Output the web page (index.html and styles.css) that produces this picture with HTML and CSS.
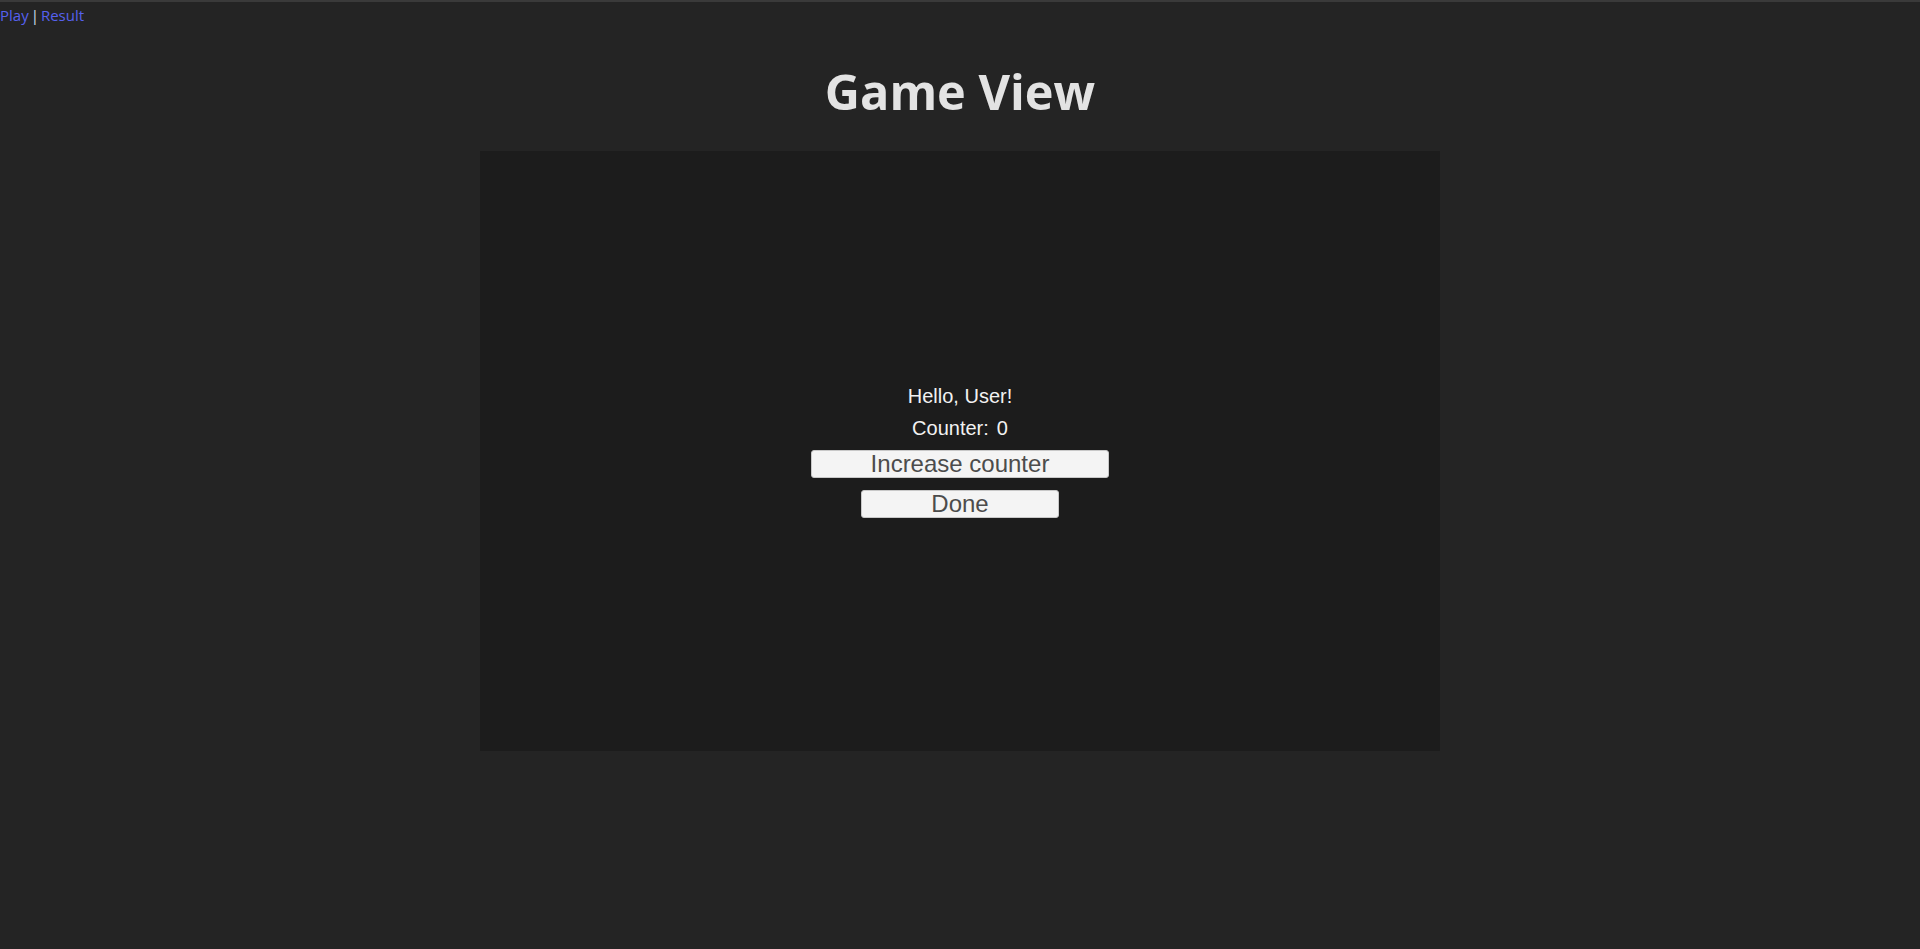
FILE: index.html
```html
<!DOCTYPE html>
<html>
<head>
<meta charset="utf-8">
<title>Game View</title>
<link rel="stylesheet" href="styles.css">
</head>
<body>
<nav class="topnav"><a href="#" class="navlink">Play</a><span class="sep">|</span><a href="#" class="navlink">Result</a></nav>
<main class="page">
  <h1 class="title">Game View</h1>
  <section class="game">
    <div class="panel">
      <div class="label">Hello, User!</div>
      <div class="label counter"><span>Counter:</span><span>0</span></div>
      <button class="btn btn-wide">Increase counter</button>
      <button class="btn btn-narrow">Done</button>
    </div>
  </section>
</main>
</body>
</html>
```
FILE: styles.css
```css
html, body {
  margin: 0;
  padding: 0;
  background: #242424;
  height: 100%;
}
body {
  border-top: 2px solid #3a3a3a;
  box-sizing: border-box;
  font-family: "Open Sans", "Noto Sans", sans-serif;
  color: #e0e0e0;
}
.topnav {
  font-size: 15px;
  line-height: 20px;
  padding-top: 3px;
  height: 21px;
}
.navlink {
  color: #5661ee;
  text-decoration: none;
}
.sep {
  color: #cfe0f0;
  margin: 0 2px;
}
.page {
  display: flex;
  flex-direction: column;
  align-items: center;
}
.title {
  margin: 33px 0 27px;
  font-size: 48.6px;
  line-height: 65px;
  font-weight: 700;
  color: #e3e3e3;
}
.game {
  width: 960px;
  height: 600px;
  background: #1c1c1c;
  display: flex;
  align-items: center;
  justify-content: center;
}
.panel {
  display: flex;
  flex-direction: column;
  align-items: center;
  font-family: "Liberation Sans", Arial, sans-serif;
  color: #f2f2f2;
  margin-top: 0;
}
.label {
  font-size: 20px;
  line-height: 24px;
  height: 24px;
}
.counter {
  margin-top: 8px;
  display: flex;
  gap: 8px;
}
.btn {
  height: 28px;
  padding: 0;
  border: 1px solid #c8c8c8;
  border-radius: 3px;
  background: #f4f4f4;
  color: #4c4c4c;
  font-family: "Liberation Sans", Arial, sans-serif;
  font-size: 24px;
  line-height: 26px;
  box-sizing: border-box;
}
.btn-wide {
  width: 298px;
  margin-top: 10px;
}
.btn-narrow {
  width: 198px;
  margin-top: 12px;
}
```
